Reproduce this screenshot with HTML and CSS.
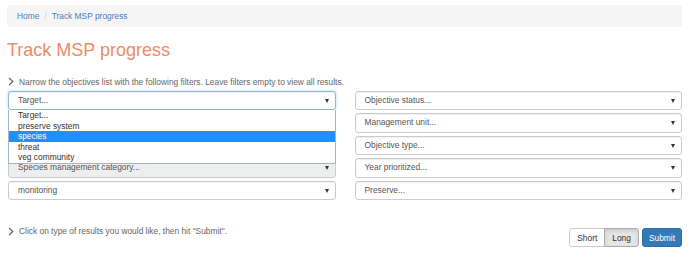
FILE: index.html
```html
<!DOCTYPE html>
<html>
  <head>
    <title>Track MSP progress</title>
    <meta charset="utf-8" />
    <link rel="stylesheet" href="styles.css">
  </head>
  <body>
    <div class="page">
      <ol class="breadcrumb">
        <li><a href="#">Home</a></li>
        <li class="sep">/</li>
        <li><a href="#">Track MSP progress</a></li>
      </ol>

      <h3 class="title">Track MSP progress</h3>

      <p class="hint">
        <svg class="chev" width="6" height="9" viewBox="0 0 6 9"><polyline points="1,0.8 4.8,4.5 1,8.2" /></svg>
        Narrow the objectives list with the following filters. Leave filters empty to view all results.
      </p>

      <div class="filters">
        <div class="col">
          <div class="field">
            <div class="select focus">Target...</div>
            <ul class="options">
              <li>Target...</li>
              <li>preserve system</li>
              <li class="picked">species</li>
              <li>threat</li>
              <li>veg community</li>
            </ul>
          </div>
          <div class="select">Objective...</div>
          <div class="select">Strategy...</div>
          <div class="select disabled">Species management category...</div>
          <div class="select">monitoring</div>
        </div>
        <div class="col">
          <div class="select">Objective status...</div>
          <div class="select">Management unit...</div>
          <div class="select">Objective type...</div>
          <div class="select">Year prioritized...</div>
          <div class="select">Preserve...</div>
        </div>
      </div>

      <div class="results">
        <p class="hint">
          <svg class="chev" width="6" height="9" viewBox="0 0 6 9"><polyline points="1,0.8 4.8,4.5 1,8.2" /></svg>
          Click on type of results you would like, then hit "Submit".
        </p>
        <div class="actions">
          <div class="btn-group">
            <button class="btn">Short</button>
            <button class="btn active">Long</button>
          </div>
          <button class="btn primary">Submit</button>
        </div>
      </div>
    </div>
  </body>
</html>
```

FILE: styles.css
```css
body {
  margin: 0;
  background-color: #fff;
  font-family: "Liberation Sans", Arial, sans-serif;
  font-size: 8.4px;
  color: #555;
}
.page {
  width: 675px;
  margin-left: 7px;
  padding-top: 5px;
}
.breadcrumb {
  display: flex;
  align-items: center;
  gap: 5px;
  list-style: none;
  margin: 0;
  height: 22px;
  padding: 0 10px;
  background-color: #f5f5f5;
  border-radius: 3px;
}
.breadcrumb a {
  color: #4a7fbc;
  text-decoration: none;
}
.breadcrumb .sep {
  color: #ccc;
}
.title {
  margin: 12px 0 0 0;
  font-size: 18px;
  font-weight: 400;
  line-height: 22px;
  color: #ee8b69;
}
.hint {
  display: flex;
  align-items: center;
  gap: 5px;
  margin: 14.5px 0 0 1px;
  line-height: 12px;
  color: #666;
}
.chev {
  fill: none;
  stroke: #555;
  stroke-width: 1.1;
}
.filters {
  display: grid;
  grid-template-columns: 327.5px 327.5px;
  column-gap: 19px;
  margin: 3px 0 0 1px;
}
.col {
  display: flex;
  flex-direction: column;
  gap: 3px;
}
.field {
  position: relative;
}
.select {
  position: relative;
  box-sizing: border-box;
  height: 19.5px;
  line-height: 17.5px;
  padding-left: 9px;
  border: 1px solid #ccc;
  border-radius: 3px;
  box-shadow: inset 0 1px 1px rgba(0, 0, 0, 0.06);
  background-color: #fff;
  color: #555;
}
.select::after {
  content: "";
  position: absolute;
  right: 6px;
  top: 7px;
  border-left: 2.5px solid transparent;
  border-right: 2.5px solid transparent;
  border-top: 4px solid #333;
}
.select.focus {
  border-color: #8fb6df;
  box-shadow: inset 0 1px 1px rgba(0, 0, 0, 0.06), 0 0 3px rgba(102, 175, 233, 0.5);
}
.select.disabled {
  background-color: #eee;
}
.options {
  position: absolute;
  top: 19.5px;
  left: 0;
  right: 0;
  z-index: 2;
  margin: 0;
  padding: 0;
  list-style: none;
  background-color: #fff;
  border: 1px solid #a5b4c8;
  border-top: none;
  color: #333;
}
.options li {
  height: 10.5px;
  line-height: 10.5px;
  padding-left: 9px;
}
.options .picked {
  background-color: #1e90ff;
  color: #fff;
}
.results {
  display: flex;
  justify-content: space-between;
  align-items: flex-start;
  margin-top: 25.4px;
}
.results .hint {
  margin-top: 0;
}
.actions {
  display: flex;
  gap: 3px;
  margin-top: 2.9px;
}
.btn-group {
  display: flex;
}
.btn {
  height: 19px;
  padding: 0 7px;
  font-family: inherit;
  font-size: 8.4px;
  color: #333;
  background-color: #fff;
  border: 1px solid #ccc;
  border-radius: 3px;
}
.btn-group .btn:first-child {
  border-radius: 3px 0 0 3px;
}
.btn-group .btn:last-child {
  margin-left: -1px;
  border-radius: 0 3px 3px 0;
}
.btn.active {
  background-color: #e6e6e6;
  border-color: #adadad;
  box-shadow: inset 0 2px 4px rgba(0, 0, 0, 0.125);
}
.btn.primary {
  padding: 0 6px;
  color: #fff;
  background-color: #337ab7;
  border-color: #2e6da4;
}
```
